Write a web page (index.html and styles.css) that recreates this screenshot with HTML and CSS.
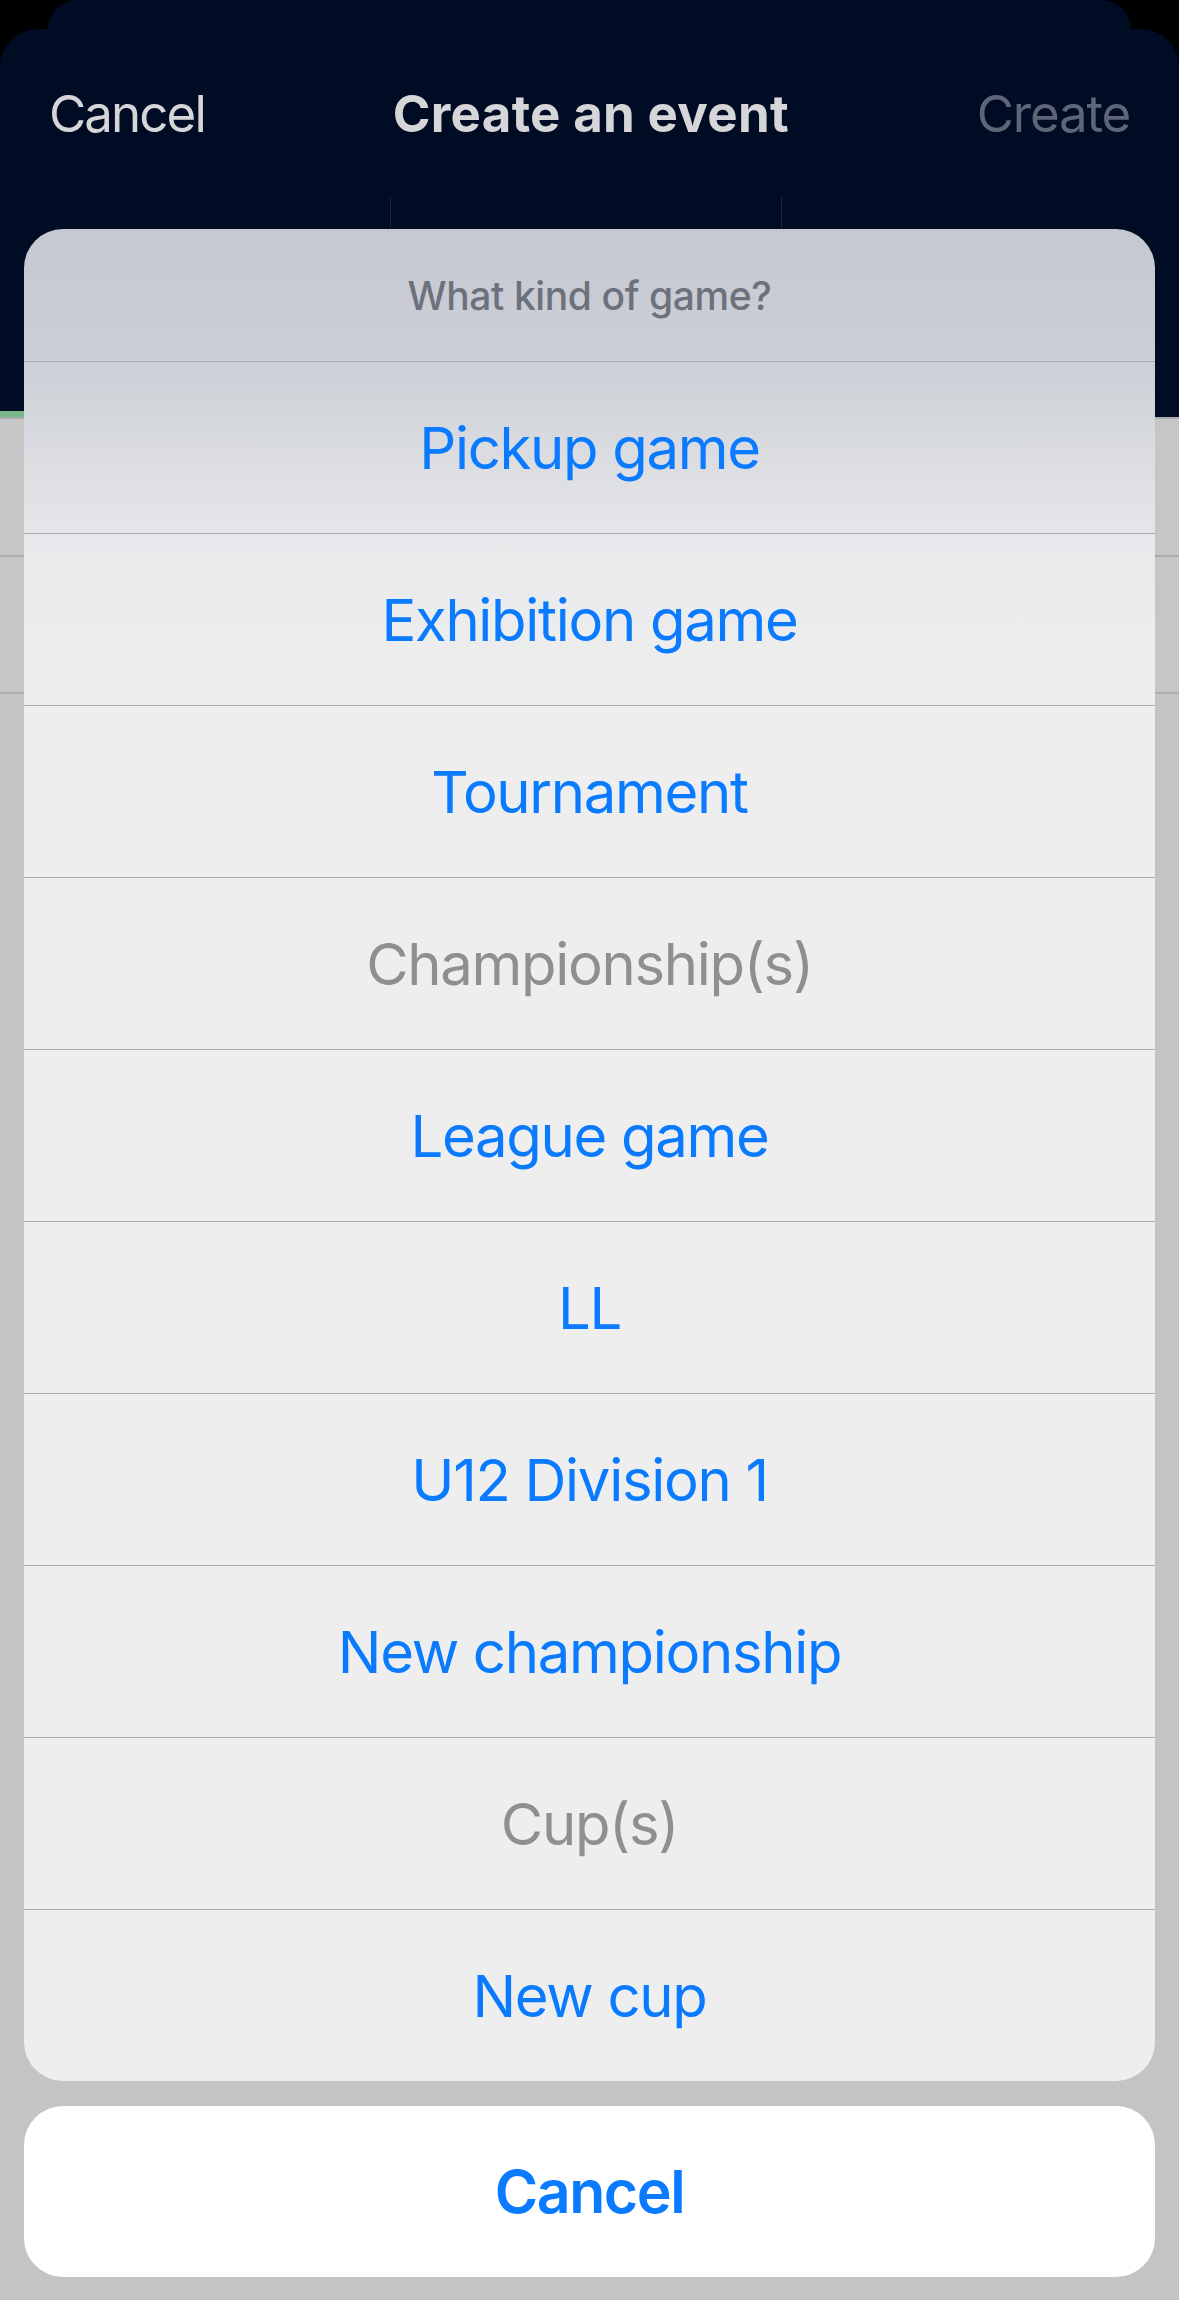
FILE: index.html
```html
<!DOCTYPE html>
<html lang="en">
<head>
<meta charset="utf-8">
<title>Create an event</title>
<link rel="stylesheet" href="styles.css">
</head>
<body>
<div class="screen">
  <div class="back-card"></div>
  <div class="front-card">
    <div class="nav">
      <span class="nav-left">Cancel</span>
      <span class="nav-title">Create an event</span>
      <span class="nav-right">Create</span>
    </div>
    <div class="tabs">
      <div class="tab"></div>
      <div class="tab"></div>
      <div class="tab"></div>
    </div>
    <div class="progress"><div class="progress-fill"></div></div>
    <div class="content">
      <div class="content-row tall"></div>
      <div class="content-row"></div>
      <div class="content-row rest"></div>
    </div>
  </div>

  <div class="sheet">
    <div class="sheet-group">
      <div class="sheet-title">What kind of game?</div>
      <div class="sheet-item">Pickup game</div>
      <div class="sheet-item">Exhibition game</div>
      <div class="sheet-item">Tournament</div>
      <div class="sheet-item disabled">Championship(s)</div>
      <div class="sheet-item">League game</div>
      <div class="sheet-item">LL</div>
      <div class="sheet-item">U12 Division 1</div>
      <div class="sheet-item">New championship</div>
      <div class="sheet-item disabled">Cup(s)</div>
      <div class="sheet-item">New cup</div>
    </div>
    <div class="sheet-cancel">Cancel</div>
  </div>
</div>
</body>
</html>
```
FILE: styles.css
```css
html, body {
  margin: 0;
  padding: 0;
  background: #000;
}
body {
  font-family: Inter, "Noto Sans", "Liberation Sans", sans-serif;
}
.screen {
  position: relative;
  width: 1179px;
  height: 2300px;
  overflow: hidden;
  background: #000;
}
.back-card {
  height: 29px;
  margin: 0 48px;
  border-radius: 34px 34px 0 0;
  background: #000b24;
}
.front-card {
  height: 2271px;
  border-radius: 38px 38px 0 0;
  background: #000b24;
  display: flex;
  flex-direction: column;
}
.nav {
  height: 168px;
  padding: 0 49px 0 49px;
  display: flex;
  align-items: center;
  justify-content: space-between;
  font-size: 51px;
  letter-spacing: -1.9px;
}
.nav-left {
  color: #d6d6d8;
}
.nav-title {
  color: #d6d6d8;
  font-weight: 700;
  letter-spacing: 0.3px;
}
.nav-right {
  color: #5e6577;
  letter-spacing: -1.2px;
}
.tabs {
  height: 214px;
  display: grid;
  grid-template-columns: 391px 391px 1fr;
}
.tab {
  border-right: 1px solid #1b2440;
}
.tab:last-child {
  border-right: none;
}
.progress {
  height: 6px;
  background: #000b24;
}
.progress-fill {
  width: 300px;
  height: 100%;
  background: #76b886;
}
.content {
  flex: 1;
  background: #c4c4c4;
  border-top: 2px solid #a9acb3;
}
.content-row {
  height: 135px;
  border-bottom: 2px solid #acacac;
  background: #c6c6c6;
}
.content-row.tall {
  height: 136px;
}
.content-row.rest {
  border-bottom: none;
  background: #c4c4c4;
}

.sheet {
  position: absolute;
  top: 229px;
  left: 24px;
  right: 24px;
  display: flex;
  flex-direction: column;
  gap: 25px;
}
.sheet-group {
  border-radius: 39px;
  overflow: hidden;
  background: linear-gradient(180deg, #c5c8d1 0px, #cccfd6 132px, #dcdee2 240px, #e9eaec 330px, #eeeeee 460px, #eeeeee 100%);
}
.sheet-title {
  height: 132px;
  display: flex;
  align-items: center;
  justify-content: center;
  font-size: 39px;
  font-weight: 500;
  color: #6d717c;
  letter-spacing: -0.4px;
}
.sheet-item {
  height: 171px;
  border-top: 1px solid #a9abb0;
  display: flex;
  align-items: center;
  justify-content: center;
  font-size: 58px;
  color: #0a7aff;
  letter-spacing: -1.3px;
}
.sheet-item.disabled {
  color: #8f8f8f;
}
.sheet-cancel {
  height: 171px;
  border-radius: 39px;
  background: #ffffff;
  display: flex;
  align-items: center;
  justify-content: center;
  font-size: 59px;
  font-weight: 600;
  color: #0a7aff;
  letter-spacing: -1.4px;
}
```
